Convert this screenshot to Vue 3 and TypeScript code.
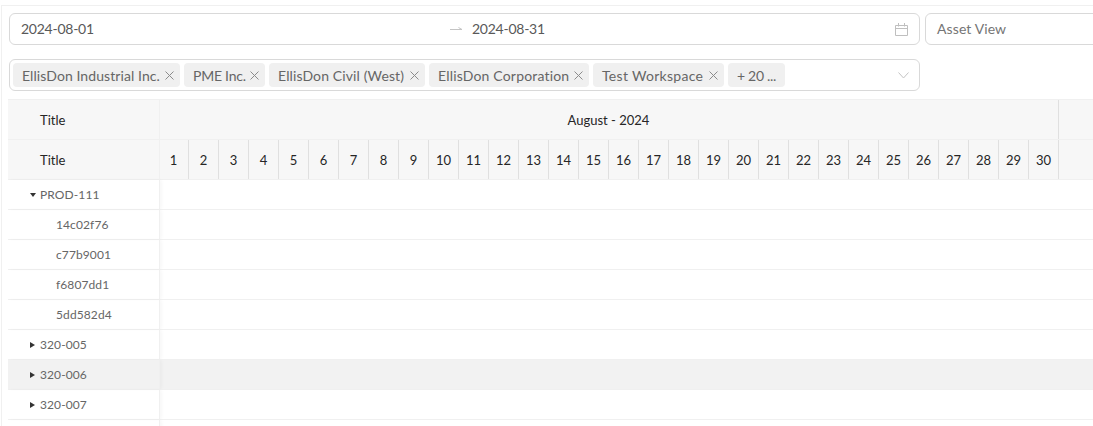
<script setup lang="ts">
interface Tag {
  label: string;
  width: number;
  spacing: number;
}

interface Row {
  title: string;
  level: 0 | 1;
  arrow?: 'open' | 'closed';
  hover?: boolean;
}

const tags: Tag[] = [
  { label: 'EllisDon Industrial Inc.', width: 167, spacing: 0.08 },
  { label: 'PME Inc.', width: 81, spacing: -0.25 },
  { label: 'EllisDon Civil (West)', width: 156, spacing: 0.12 },
  { label: 'EllisDon Corporation', width: 160, spacing: 0.18 },
  { label: 'Test Workspace', width: 131, spacing: 0.3 }
];

const days: number[] = Array.from({ length: 30 }, (_, i) => i + 1);

const rows: Row[] = [
  { title: 'PROD-111', level: 0, arrow: 'open' },
  { title: '14c02f76', level: 1 },
  { title: 'c77b9001', level: 1 },
  { title: 'f6807dd1', level: 1 },
  { title: '5dd582d4', level: 1 },
  { title: '320-005', level: 0, arrow: 'closed' },
  { title: '320-006', level: 0, arrow: 'closed', hover: true },
  { title: '320-007', level: 0, arrow: 'closed' },
  { title: '', level: 0 }
];
</script>

<template>
  <div class="page">
    <div class="content">
      <div class="filters">
        <div class="date-row">
          <div class="date-range">
            <span class="date-from">2024-08-01</span>
            <svg class="arrow" width="13" height="6" viewBox="0 0 13 6">
              <path d="M0 4.5H12L8.5 2.5" fill="none" stroke="#c4c4c4" stroke-width="1" />
            </svg>
            <span class="date-to">2024-08-31</span>
            <svg class="calendar" width="13" height="13" viewBox="0 0 13 13">
              <path
                d="M0.5 2.5H12.5V12.5H0.5ZM0.5 5.5H12.5M3.5 0V3.5M9.5 0V3.5"
                fill="none"
                stroke="#bfbfbf"
                stroke-width="1"
              />
            </svg>
          </div>
          <div class="view-select">Asset View</div>
        </div>
        <div class="tag-select">
          <span
            v-for="tag in tags"
            :key="tag.label"
            class="tag"
            :style="{ width: tag.width + 'px', letterSpacing: tag.spacing + 'px' }"
          >
            {{ tag.label }}
            <svg class="tag-close" width="9" height="9" viewBox="0 0 9 9">
              <path d="M0.5 0.5L8.5 8.5M8.5 0.5L0.5 8.5" stroke="#8c8c8c" stroke-width="1" />
            </svg>
          </span>
          <span class="tag more">+ 20 ...</span>
          <svg class="chevron" width="11" height="7" viewBox="0 0 11 7">
            <path d="M0.5 0.5L5.5 6L10.5 0.5" fill="none" stroke="#c4c4c4" stroke-width="1" />
          </svg>
        </div>
      </div>

      <div class="gantt">
        <div class="head-row">
          <div class="title-cell">Title</div>
          <div class="month-cell">August - 2024</div>
          <div class="rest-cell"></div>
        </div>
        <div class="head-row">
          <div class="title-cell">Title</div>
          <div v-for="day in days" :key="day" class="day-cell">{{ day }}</div>
          <div class="rest-cell"></div>
        </div>
        <div v-for="(row, i) in rows" :key="i" class="body-row" :class="{ hover: row.hover }">
          <div class="name-cell" :class="{ child: row.level === 1 }">
            <span v-if="row.arrow === 'open'" class="caret open"></span>
            <span v-if="row.arrow === 'closed'" class="caret closed"></span>
            {{ row.title }}
          </div>
        </div>
      </div>
    </div>
  </div>
</template>

<style scoped>
.page {
  width: 1093px;
  height: 426px;
  box-sizing: border-box;
  padding: 5px 0 0 1px;
  overflow: hidden;
  font-family: "Lato", "Open Sans", sans-serif;
  font-size: 14px;
  color: #666;
  background: #fff;
}

.content {
  height: 100%;
  border-top: 1px solid #f0f0f0;
  border-left: 1px solid #f0f0f0;
}

.filters {
  padding: 7px 0 0 7px;
}

.date-row {
  display: flex;
  gap: 5px;
}

.date-range {
  display: flex;
  align-items: center;
  width: 911px;
  height: 32px;
  flex: none;
  box-sizing: border-box;
  padding: 0 11px 2px;
  border: 1px solid #d9d9d9;
  border-radius: 6px;
  letter-spacing: -0.25px;
  color: #595959;
}

.date-from {
  width: 429px;
}

.arrow {
  margin-right: 9px;
}

.calendar {
  margin-left: auto;
  margin-top: 2px;
}

.view-select {
  display: flex;
  align-items: center;
  width: 300px;
  height: 32px;
  flex: none;
  box-sizing: border-box;
  padding: 0 11px 2px;
  border: 1px solid #d9d9d9;
  border-radius: 6px;
  letter-spacing: 0.1px;
  color: #757575;
}

.tag-select {
  display: flex;
  align-items: center;
  gap: 4px;
  width: 911px;
  height: 32px;
  box-sizing: border-box;
  margin-top: 14px;
  padding: 0 3px;
  border: 1px solid #d9d9d9;
  border-radius: 6px;
}

.tag {
  display: flex;
  align-items: center;
  justify-content: space-between;
  flex: none;
  height: 24px;
  box-sizing: border-box;
  padding: 0 6px 0 9px;
  border-radius: 4px;
  background: #f0f0f0;
  white-space: nowrap;
}

.tag.more {
  width: 57px;
  padding-right: 0;
  letter-spacing: -0.3px;
}

.tag-close {
  margin-top: 1px;
}

.chevron {
  margin-left: auto;
  margin-right: 7px;
}

.gantt {
  margin: 8px 0 0 6px;
}

.head-row {
  display: flex;
  height: 40px;
  border-top: 1px solid #f0f0f0;
  box-sizing: border-box;
  background: #f7f7f7;
  color: #262626;
  font-size: 13px;
}

.title-cell {
  display: flex;
  align-items: center;
  width: 152px;
  margin-right: -1px;
  flex: none;
  box-sizing: border-box;
  padding-left: 32px;
  border-right: 1px solid #f0f0f0;
}

.month-cell {
  display: flex;
  align-items: center;
  justify-content: center;
  width: 900px;
  flex: none;
  box-sizing: border-box;
  border-right: 1px solid #e0e0e0;
}

.day-cell {
  display: flex;
  align-items: center;
  justify-content: center;
  width: 30px;
  flex: none;
  box-sizing: border-box;
  border-right: 1px solid #e0e0e0;
}

.rest-cell {
  flex: 1;
}

.body-row {
  height: 30px;
  box-sizing: border-box;
  border-top: 1px solid #f0f0f0;
  font-size: 12px;
}

.body-row.hover {
  background: #f2f2f2;
}

.name-cell {
  display: flex;
  align-items: center;
  gap: 5px;
  width: 152px;
  height: 100%;
  box-sizing: border-box;
  padding-left: 22px;
  border-right: 1px solid #f0f0f0;
  box-shadow: 2px 0 3px rgba(0, 0, 0, 0.03);
  letter-spacing: 0.1px;
}

.name-cell.child {
  padding-left: 48px;
}

.caret {
  width: 0;
  height: 0;
}

.caret.open {
  margin-right: -1px;
  border-left: 3px solid transparent;
  border-right: 3px solid transparent;
  border-top: 4px solid #333;
}

.caret.closed {
  border-top: 3px solid transparent;
  border-bottom: 3px solid transparent;
  border-left: 5px solid #333;
}
</style>
